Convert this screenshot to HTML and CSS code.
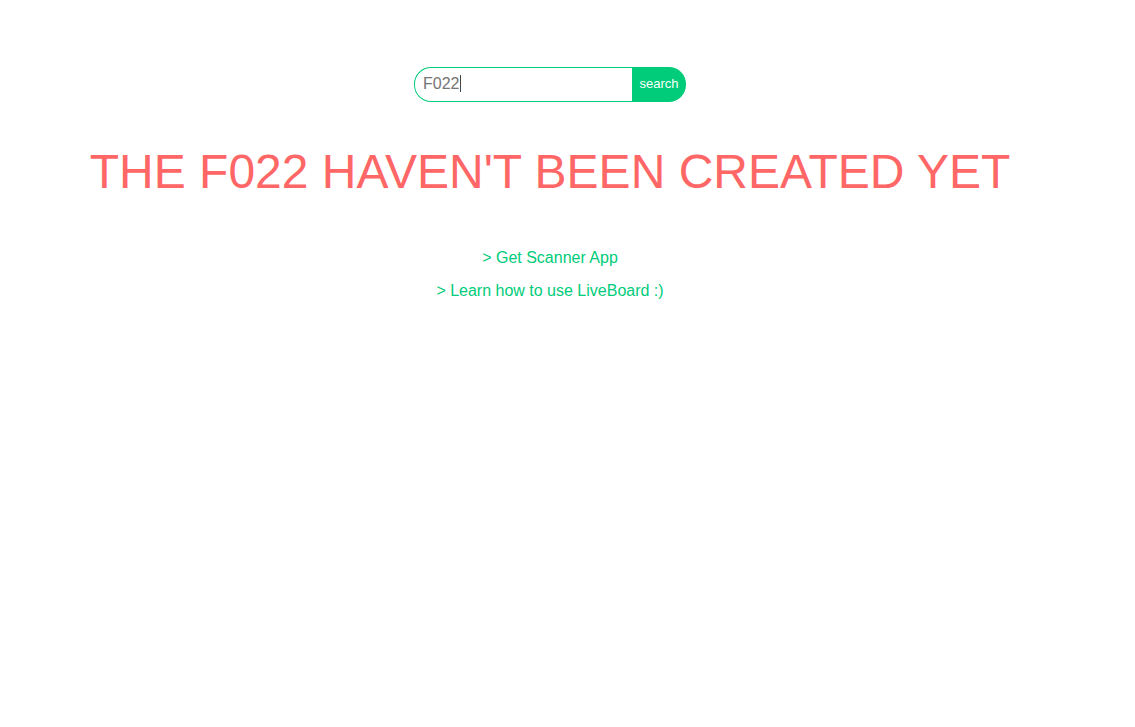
FILE: index.html
```html
<!DOCTYPE html>
<html>
<head>
<meta charset="utf-8">
<link rel="stylesheet" href="styles.css">
</head>
<body>
<div class="page">
  <form class="search">
    <div class="search-input">F022<span class="caret"></span></div>
    <button class="search-btn" type="button">search</button>
  </form>
  <h1 class="title">THE F022 HAVEN'T BEEN CREATED YET</h1>
  <div class="links">
    <a class="link" href="#">&gt; Get Scanner App</a>
    <a class="link" href="#">&gt; Learn how to use LiveBoard :)</a>
  </div>
</div>
</body>
</html>
```
FILE: styles.css
```css
html, body {
  margin: 0;
  padding: 0;
  background: #fff;
  font-family: "Liberation Sans", Arial, sans-serif;
}
.page {
  width: 1100px;
  display: flex;
  flex-direction: column;
  align-items: center;
  padding-top: 67px;
}
.search {
  display: flex;
  width: 272px;
  height: 35px;
  margin: 0;
}
.search-input {
  flex: 1;
  box-sizing: border-box;
  border: 1px solid #00cc7a;
  border-right: none;
  border-radius: 17px 0 0 17px;
  padding-left: 8px;
  padding-bottom: 2px;
  font-size: 16px;
  color: #757575;
  display: flex;
  align-items: center;
}
.caret {
  display: inline-block;
  width: 1px;
  height: 17px;
  background: #444;
  margin-left: 1px;
}
.search-btn {
  width: 54px;
  border: none;
  background: #00cc7a;
  color: #fff;
  font-family: "Liberation Sans", Arial, sans-serif;
  font-size: 13px;
  border-radius: 0 17px 17px 0;
  padding: 0 0 2px;
}
.title {
  margin: 42px 0 0;
  font-weight: normal;
  font-size: 48px;
  line-height: 56px;
  color: #ff6666;
  white-space: nowrap;
}
.links {
  margin-top: 49px;
  display: flex;
  flex-direction: column;
  align-items: center;
  gap: 15px;
}
.link {
  color: #00cc7a;
  text-decoration: none;
  font-size: 16px;
  line-height: 18px;
}
```
